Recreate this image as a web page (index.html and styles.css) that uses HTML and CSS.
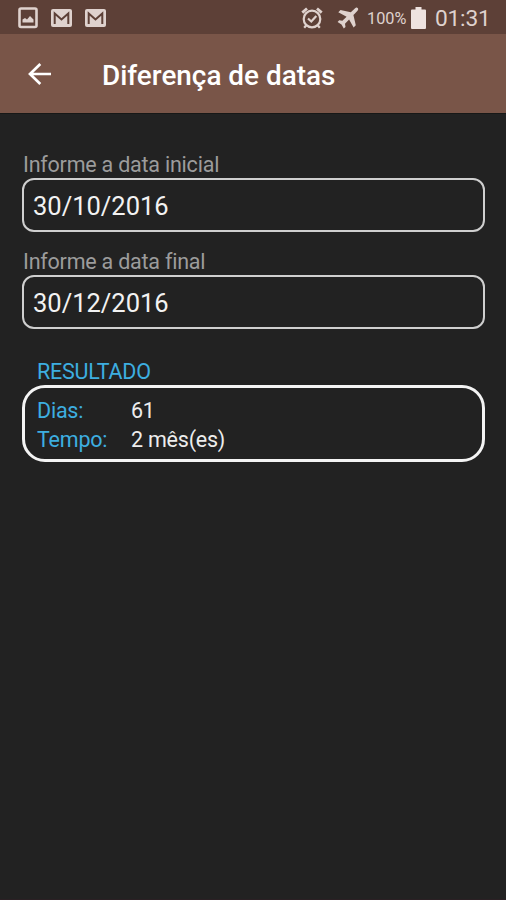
FILE: index.html
```html
<!DOCTYPE html>
<html lang="pt-BR">
<head>
<meta charset="utf-8">
<title>Diferença de datas</title>
<link rel="stylesheet" href="styles.css">
</head>
<body>
<div class="screen">
  <div class="status">
    <div class="notifications">
      <svg width="20" height="22" viewBox="0 0 20 22"><rect x="1.500" y="1.500" width="17" height="18.500" rx="1.500" fill="none" stroke="currentColor" stroke-width="2.600"/><path d="M4.500 15.500v-3l2.500-1.500 2 1.500 3-3.500 3.500 3.500v3z" fill="currentColor"/></svg>
      <svg width="21" height="18" viewBox="0 0 21 18"><rect width="21" height="18" rx="2" fill="currentColor"/><path d="M3.700 15V4.500l6.800 6 6.800-6V15" fill="none" stroke="#5d4037" stroke-width="2"/></svg>
      <svg width="21" height="18" viewBox="0 0 21 18"><rect width="21" height="18" rx="2" fill="currentColor"/><path d="M3.700 15V4.500l6.800 6 6.800-6V15" fill="none" stroke="#5d4037" stroke-width="2"/></svg>
    </div>
    <svg class="alarm" width="22" height="22" viewBox="0 0 22 22" fill="none" stroke="currentColor" stroke-width="2.200"><circle cx="11" cy="12" r="8.300"/><path d="M1.300 5.600 6 1.500M20.700 5.600 16 1.500" stroke-width="2.800"/><path d="m7 11.500 3.300 3 5-5.500"/><path d="m5.500 18-2.300 2.700M16.500 18l2.300 2.700"/></svg>
    <svg class="plane" width="22" height="22" viewBox="0 0 22 22"><path d="M18.800.8c1.200-.9 3 .7 2.200 2.100-.5 1-3 3.500-4.600 5.200l2.400 10.200-2.200 2.200-4.500-8-4.100 4.200.5 3.200-1.700 1.600-2.300-4L.6 15l1.600-1.700 3.200.5 4.200-4.100L1.300 5.200l2.200-2.300 10.300 2.400C15.500 3.600 17.800 1.500 18.800.8z" fill="currentColor"/></svg>
    <span class="percent">100%</span>
    <svg class="battery" width="15" height="22" viewBox="0 0 15 22"><path d="M4.500 0h6v2.500H14a1 1 0 0 1 1 1V21a1 1 0 0 1-1 1H1a1 1 0 0 1-1-1V3.500a1 1 0 0 1 1-1h3.500z" fill="currentColor"/></svg>
    <span class="clock">01:31</span>
  </div>
  <header class="toolbar">
    <svg width="23" height="22" viewBox="0 0 23 22" fill="none" stroke="#fff" stroke-width="2.700"><path d="M23 11H2M12.300 1 2 11l10.300 10"/></svg>
    <h1>Diferença de datas</h1>
  </header>
  <main>
    <label class="field"><span>Informe a data inicial</span><input type="text" value="30/10/2016"></label>
    <label class="field"><span>Informe a data final</span><input type="text" value="30/12/2016"></label>
    <h2>RESULTADO</h2>
    <dl class="result">
      <dt>Dias:</dt><dd>61</dd>
      <dt>Tempo:</dt><dd>2 mês(es)</dd>
    </dl>
  </main>
</div>
</body>
</html>
```
FILE: styles.css
```css
* { box-sizing: border-box; }
body { margin: 0; background: #222; font-family: Roboto, sans-serif; }
.screen { height: 900px; background: #222; border-bottom: 1px solid #2b2024; overflow: hidden; }
svg { display: block; flex: none; }
.status { display: flex; align-items: center; height: 34px; padding: 2px 17px 0 18px; background: #5d4037; color: #dfd2ce; }
.notifications { display: flex; align-items: center; gap: 13px; margin-right: auto; }
.plane { margin-left: 14px; }
.percent { margin-left: 8px; padding-top: 1px; font-size: 16.300px; width: 40px; white-space: nowrap; }
.battery { margin-left: 4px; color: #eee2df; }
.clock { margin-left: 9px; width: 54px; padding-top: 1px; font-size: 22.700px; line-height: 30px; letter-spacing: -0.200px; white-space: nowrap; }
.toolbar { display: flex; align-items: center; height: 79px; padding: 1px 28px 0; background: #795548; box-shadow: 0 1px 0 #171817; }
h1 { margin: 2px 0 0 51px; font-size: 27.900px; font-weight: 500; color: #fff; white-space: nowrap; }
main { padding: 38px 21px 0 22px; }
.field { display: block; margin-bottom: 16px; }
.field span { display: block; height: 27px; padding-left: 1px; font-size: 21.500px; letter-spacing: -0.220px; line-height: 28px; color: #9c9c9c; }
.field input { display: block; width: 100%; height: 54px; padding: 2px 9px 0; border: 2px solid #cfcfcf; border-radius: 12px; background: transparent; color: #f2f2f2; font: 25.500px Roboto, sans-serif; outline: none; }
h2 { margin: 29px 0 0 15px; height: 27px; font-size: 21.500px; letter-spacing: -0.220px; font-weight: 400; line-height: 28px; color: #3daee0; }
.result { display: grid; grid-template-columns: 94px 1fr; grid-auto-rows: 28.500px; margin: 0; height: 77px; padding: 8px 12px; border: 3px solid #f4f4f4; border-radius: 23px; font-size: 21.500px; letter-spacing: -0.220px; line-height: 29px; color: #ededed; }
dt { color: #3daee0; }
dd { margin: 0; }
```
